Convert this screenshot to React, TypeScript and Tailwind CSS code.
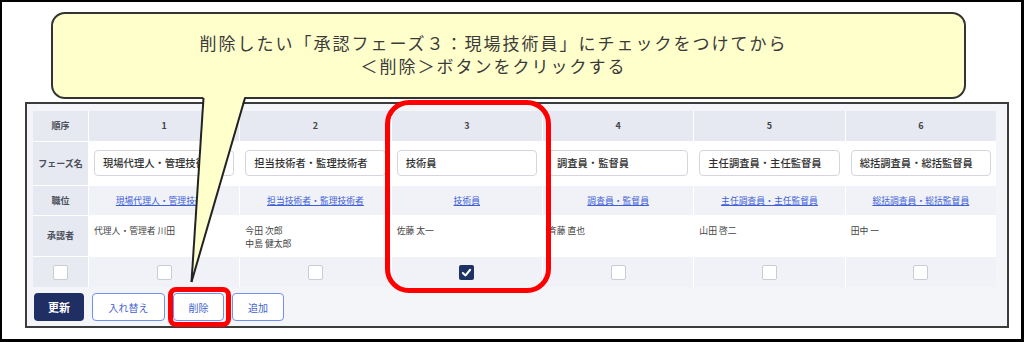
const phases = [
  { no: 1, name: "現場代理人・管理技術者", approvers: ["代理人・管理者 川田"], checked: false },
  { no: 2, name: "担当技術者・監理技術者", approvers: ["今田 次郎", "中島 健太郎"], checked: false },
  { no: 3, name: "技術員", approvers: ["佐藤 太一"], checked: true },
  { no: 4, name: "調査員・監督員", approvers: ["斉藤 直也"], checked: false },
  { no: 5, name: "主任調査員・主任監督員", approvers: ["山田 啓二"], checked: false },
  { no: 6, name: "総括調査員・総括監督員", approvers: ["田中 一"], checked: false },
];

const Check = ({ checked }: { checked: boolean }) =>
  checked ? (
    <div className="w-[15px] h-[15px] rounded-[2px] bg-[#1f3266] flex items-center justify-center">
      <svg width="11" height="11" viewBox="0 0 12 12">
        <polyline points="2,6.5 5,9.2 10,3" fill="none" stroke="white" strokeWidth="2.2" strokeLinecap="round" strokeLinejoin="round" />
      </svg>
    </div>
  ) : (
    <div className="w-[15px] h-[15px] rounded-[2px] bg-white border border-[#c9ccd3]" />
  );

const Head = ({ children }: { children: React.ReactNode }) => (
  <div className="bg-[#e6e9f1] flex items-center justify-center text-[9px] font-bold text-[#4a4f5a]">{children}</div>
);

export default function App() {
  return (
    <div className="relative w-[1024px] h-[342px] overflow-hidden font-['Noto_Sans_CJK_JP',sans-serif]">
      <div className="w-full h-full bg-white border-black border-t-2 border-l-2 border-r-[3px] border-b-[3px]">
        {/* callout box */}
        <div className="mt-[10px] ml-[49px] w-[915px] h-[87px] rounded-[14px] border-2 border-[#333] bg-[#ffffcc] flex flex-col items-center justify-center pr-[30px] pb-[4px] text-[17px] leading-[23px] tracking-[2px] text-[#3a3a3a]">
          <p>削除したい「承認フェーズ３：現場技術員」にチェックをつけてから</p>
          <p>＜削除＞ボタンをクリックする</p>
        </div>

        {/* screenshot panel */}
        <div className="mt-[3px] ml-[23px] w-[984px] h-[226px] border-2 border-[#3c3c3c] bg-[#f4f5f9] pt-[7px] pl-[6px]">
          <div className="grid w-[963px] grid-cols-[55px_repeat(6,1fr)] grid-rows-[30px_43px_29px_40px_30px] gap-px bg-white">
            <Head>順序</Head>
            {phases.map((p) => (
              <div key={"n" + p.no} className="bg-[#e6e9f1] flex items-center justify-center text-[9px] font-bold text-[#444]">
                {p.no}
              </div>
            ))}

            <Head>フェーズ名</Head>
            {phases.map((p) => (
              <div key={"f" + p.no} className="bg-white px-[5px] pt-[8px]">
                <div className="h-[26px] rounded-[4px] border border-[#d3d6dc] bg-white pl-[8px] flex items-center text-[10.3px] font-medium text-[#2f2f2f] whitespace-nowrap overflow-hidden">
                  {p.name}
                </div>
              </div>
            ))}

            <Head>職位</Head>
            {phases.map((p) => (
              <div key={"r" + p.no} className="bg-[#f0f2f7] flex items-center justify-center">
                <span className="text-[8.8px] text-[#3f5fd8] underline">{p.name}</span>
              </div>
            ))}

            <Head>承認者</Head>
            {phases.map((p) => (
              <div key={"a" + p.no} className="bg-white pl-[5px] pt-[8px] text-[8.8px] leading-[13px] text-[#444]">
                {p.approvers.map((a) => (
                  <p key={a}>{a}</p>
                ))}
              </div>
            ))}

            <div className="bg-[#e8eaf1] flex items-center justify-center">
              <Check checked={false} />
            </div>
            {phases.map((p) => (
              <div key={"c" + p.no} className="bg-[#f0f2f7] flex items-center justify-center">
                <Check checked={p.checked} />
              </div>
            ))}
          </div>

          <div className="mt-[6px] ml-px flex gap-2">
            <button className="w-[50px] h-[28px] rounded-[4px] bg-[#1f2e63] text-white text-[11px] font-bold">更新</button>
            <button className="w-[73px] h-[28px] rounded-[4px] bg-white border border-[#7390f0] text-[#4362d0] text-[10px]">入れ替え</button>
            <button className="w-[51px] h-[28px] rounded-[4px] bg-white border border-[#7390f0] text-[#4362d0] text-[10px]">削除</button>
            <button className="w-[52px] h-[28px] rounded-[4px] bg-white border border-[#7390f0] text-[#4362d0] text-[10px]">追加</button>
          </div>
        </div>
      </div>

      {/* callout tail */}
      <svg className="absolute left-0 top-0 pointer-events-none" width="1024" height="342" viewBox="0 0 1024 342">
        <polygon points="203.5,95 245,95 191.5,282" fill="#ffffcc" />
        <line x1="203.5" y1="98" x2="191.5" y2="282" stroke="#222" strokeWidth="2" />
        <line x1="245" y1="98" x2="191.5" y2="282" stroke="#222" strokeWidth="2" />
      </svg>

      {/* red highlight marks */}
      <div className="absolute left-[385px] top-[100px] w-[166px] h-[193px] rounded-[24px] border-[5px] border-[#ff0000]" />
      <div className="absolute left-[168px] top-[287px] w-[63px] h-[40px] rounded-[8px] border-[5px] border-[#ff0000]" />
    </div>
  );
}
